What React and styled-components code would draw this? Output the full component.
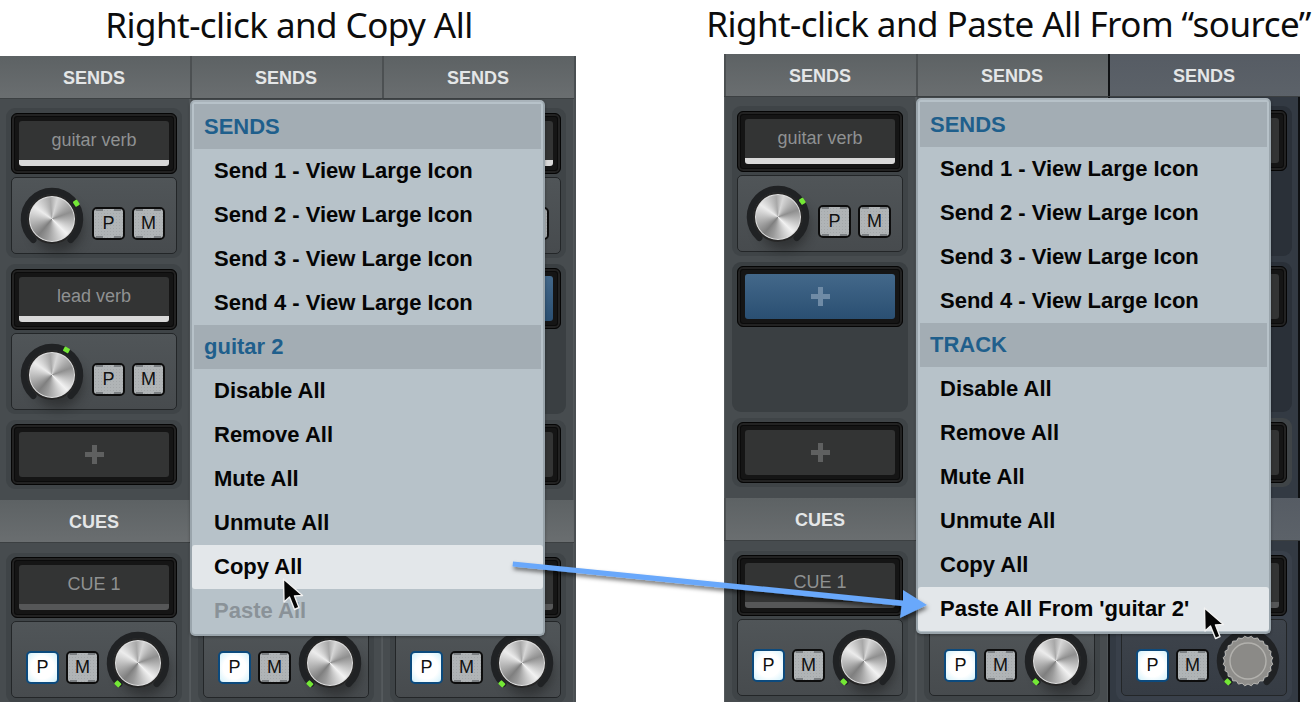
import React from "react";
import styled, { createGlobalStyle } from "styled-components";

const Global = createGlobalStyle`
  html, body { margin: 0; padding: 0; background: #fff; }
  body { font-family: "Liberation Sans", Arial, sans-serif; overflow: hidden; }
`;

const Page = styled.div`
  position: relative;
  display: flex;
  width: 1312px;
  height: 702px;
  overflow: hidden;
  background: #fff;
`;

const Scene = styled.section`
  display: flex;
  flex-direction: column;
  flex: none;
  width: ${(p) => p.$width}px;
  margin-left: ${(p) => p.$offset}px;
  height: 702px;
`;

const Title = styled.h1`
  margin: 0 0 0 ${(p) => p.$shift}px;
  height: ${(p) => p.$height}px;
  display: flex;
  justify-content: center;
  align-items: center;
  padding-bottom: 8px;
  box-sizing: border-box;
  white-space: nowrap;
  font-family: "Noto Sans", sans-serif;
  font-weight: 400;
  font-size: 35px;
  letter-spacing: -0.56px;
  color: #0c0c0c;
`;

const Console = styled.div`
  position: relative;
  flex: 1;
  display: flex;
  min-height: 0;
  background: #4a4f52;
`;

const Strip = styled.div`
  flex: none;
  width: 192px;
  box-sizing: border-box;
  display: flex;
  flex-direction: column;
  background: ${(p) => (p.$selected ? "#333a43" : "#474c4f")};
  box-shadow: ${(p) =>
    p.$selected
      ? "inset 2px 0 0 #101214, inset -2px 0 0 #0e1012"
      : "inset 1px 0 0 #555a5d, inset -1px 0 0 #52575a"};
`;

const SectionHeader = styled.div`
  flex: none;
  height: 42px;
  padding-top: 2px;
  box-sizing: border-box;
  display: flex;
  align-items: center;
  justify-content: center;
  font-size: 18px;
  font-weight: 700;
  color: #e4e6e7;
  background: ${(p) =>
    p.$selected
      ? "linear-gradient(#565c64, #5c6269)"
      : "linear-gradient(#5d6264, #6a6e70)"};
  box-shadow: inset ${(p) => (p.$selected ? "2px 0 0 #101214" : "2px 0 0 #4c5052")},
    0 1px 0 #3c4042;
`;

const SendsArea = styled.div`
  flex: none;
  height: 402px;
  box-sizing: border-box;
  padding: 10px 8px 0;
  display: flex;
  flex-direction: column;
  gap: 6px;
`;

const CueArea = styled.div`
  flex: 1;
  padding: 11px 8px 0;
`;

const Group = styled.div`
  box-sizing: border-box;
  width: 176px;
  height: ${(p) => p.$h}px;
  padding: ${(p) => p.$top || 4}px 5px 4px;
  border-radius: 9px;
  background: ${(p) =>
    p.$empty
      ? p.$selected ? "#2a3038" : "#3a3f42"
      : p.$selected ? "#39404a" : "#3f4447"};
  display: flex;
  flex-direction: column;
  gap: 3px;
`;

const Slot = styled.div`
  flex: none;
  box-sizing: border-box;
  height: 61px;
  padding: 7px;
  border-radius: 6px;
  background: #151515;
  border: 1px solid #050505;
  box-shadow: inset 0 0 0 2px #222, inset 0 0 0 3px #0b0b0b;
  display: flex;
`;

const Face = styled.div`
  flex: 1;
  overflow: hidden;
  border-radius: 3px;
  display: flex;
  align-items: center;
  justify-content: center;
  font-size: 18px;
  background: ${(p) =>
    p.$blue ? "linear-gradient(#43688a, #2a4f72)" : "#333434"};
  border-bottom: ${(p) =>
    p.$bar === "on" ? "6px solid #d9d9d9" : p.$bar === "off" ? "6px solid #565758" : "none"};
  color: ${(p) => (p.$blue ? "#6d8aa5" : "#8f9192")};
`;

const Control = styled.div`
  flex: none;
  box-sizing: border-box;
  height: 77px;
  padding: 9px 0 0 ${(p) => (p.$cue ? 14 : 8)}px;
  border-radius: 5px;
  border: 1px solid #232628;
  background: ${(p) =>
    p.$selected ? "linear-gradient(#3e444c, #363c44)" : "linear-gradient(#505558, #474b4e)"};
  display: flex;
  align-items: flex-start;
  gap: ${(p) => (p.$cue ? 7 : 8)}px;
`;

const Buttons = styled.div`
  display: flex;
  gap: 7px;
  margin-top: 20px;
`;

const Toggle = styled.div`
  width: 33px;
  height: 33px;
  box-sizing: border-box;
  border-radius: 5px;
  display: flex;
  align-items: center;
  justify-content: center;
  font-size: 18px;
  color: #111;
  border: 2px solid ${(p) => (p.$on ? "#0c4a7d" : "#0d0d0d")};
  background: ${(p) =>
    p.$on
      ? `radial-gradient(circle, #ffffff 55%, #d2f1fb 100%)`
      : `linear-gradient(#7b7f82,#7b7f82) 2px 0/7px 2px no-repeat,
         linear-gradient(#7b7f82,#7b7f82) 20px 0/7px 2px no-repeat,
         linear-gradient(#7b7f82,#7b7f82) 2px 27px/7px 2px no-repeat,
         linear-gradient(#7b7f82,#7b7f82) 20px 27px/7px 2px no-repeat,
         radial-gradient(#a3a7a9 1px, transparent 1px) 0 0/3px 3px,
         #b0b4b6`};
`;

const KnobWrap = styled.div`
  position: relative;
  flex: none;
  width: 64px;
  height: 64px;
`;

const KnobArc = styled.svg`
  position: absolute;
  inset: 0;
`;

const Metal = styled.div`
  position: absolute;
  left: 7px;
  top: 7px;
  width: 50px;
  height: 50px;
  box-sizing: border-box;
  border-radius: 50%;
  border: 2px solid #262626;
  box-shadow: inset 0 0 0 1px #e0e0e0, 6px 8px 12px rgba(20, 20, 20, 0.45);
  background: conic-gradient(
    from 15deg,
    #d6d6d6,
    #8f8f8f 55deg,
    #f2f2f2 120deg,
    #9a9a9a 180deg,
    #7f7f7f 205deg,
    #ececec 290deg,
    #a8a8a8 340deg,
    #d6d6d6
  );
`;

const Menu = styled.div`
  position: absolute;
  left: 192px;
  top: 44px;
  width: 355px;
  height: 536px;
  box-sizing: border-box;
  padding: 2px 0;
  border-radius: 5px;
  background: #b7c2c9;
  border: 2px solid #9aa5ac;
  border-top-color: #a9b3ba;
  box-shadow: 0 1px 3px rgba(0, 0, 0, 0.35);
  z-index: 2;
`;

const MenuHeading = styled.div`
  box-sizing: border-box;
  height: ${(p) => p.$h}px;
  margin: 0 2px;
  padding-left: 10px;
  display: flex;
  align-items: center;
  font-size: 22px;
  font-weight: 700;
  color: #1f5f8c;
  background: #a3adb4;
`;

const MenuItem = styled.div`
  box-sizing: border-box;
  height: 44px;
  padding-left: 22px;
  display: flex;
  align-items: center;
  font-size: 22px;
  font-weight: 700;
  border-radius: 3px;
  white-space: nowrap;
  color: ${(p) => (p.$disabled ? "#8a9298" : "#050505")};
  background: ${(p) => (p.$hot ? "#e3e7ea" : "transparent")};
`;

const Pointer = styled.svg`
  position: absolute;
  z-index: 3;
  left: ${(p) => p.$x}px;
  top: ${(p) => p.$y}px;
`;

const FlowArrow = styled.svg`
  position: absolute;
  left: 505px;
  top: 552px;
  z-index: 4;
`;

const AddMark = styled.span`
  display: flex;
  color: ${(p) => (p.$blue ? "#6f8ba6" : "#5f6060")};
`;

const polar = (deg, r) => {
  const a = ((deg - 90) * Math.PI) / 180;
  return [32 + r * Math.cos(a), 32 + r * Math.sin(a)];
};

const Knob = ({ led, gear }) => {
  const [ax, ay] = polar(-138, 28);
  const [bx, by] = polar(138, 28);
  const [lx, ly] = polar(led, 29);
  let teeth = "";
  if (gear) {
    for (let i = 0; i < 48; i++) {
      const a = (i / 48) * Math.PI * 2;
      const r = i % 2 ? 25 : 23;
      teeth += `${i ? "L" : "M"}${32 + r * Math.cos(a)} ${32 + r * Math.sin(a)}`;
    }
    teeth += "Z";
  }
  return (
    <KnobWrap>
      {!gear && <Metal />}
      <KnobArc width="64" height="64" viewBox="0 0 64 64">
        <path
          d={`M${ax} ${ay}A28 28 0 1 1 ${bx} ${by}`}
          fill="none"
          stroke="#202224"
          strokeWidth="6.5"
          strokeLinecap="round"
        />
        <rect
          x={lx - 3}
          y={ly - 2.5}
          width="6"
          height="5"
          rx="1"
          fill="#74e836"
          transform={`rotate(${led} ${lx} ${ly})`}
        />
        {gear && (
          <g>
            <path d={teeth} fill="#8f8e8b" stroke="#b9b8b4" strokeWidth="1" />
            <circle cx="32" cy="32" r="18" fill="#8b8a87" stroke="#b2b1ad" strokeWidth="1.4" />
          </g>
        )}
      </KnobArc>
    </KnobWrap>
  );
};

const Plus = () => (
  <svg width="19" height="19" viewBox="0 0 19 19">
    <path d="M7 0h5v7h7v5h-7v7H7v-7H0V7h7z" fill="currentColor" />
  </svg>
);

const Name = ({ text, bar }) => (
  <Slot>
    <Face $bar={bar}>{text}</Face>
  </Slot>
);

const AddSlot = ({ blue }) => (
  <Slot>
    <Face $blue={blue}>
      <AddMark $blue={blue}>
        <Plus />
      </AddMark>
    </Face>
  </Slot>
);

const SendControl = ({ led, selected }) => (
  <Control $selected={selected}>
    <Knob led={led} />
    <Buttons>
      <Toggle>P</Toggle>
      <Toggle>M</Toggle>
    </Buttons>
  </Control>
);

const SendGroup = ({ text, led, selected }) => (
  <Group $h={150} $top={5} $selected={selected}>
    <Name text={text} bar="on" />
    <SendControl led={led} selected={selected} />
  </Group>
);

const AddGroup = ({ selected }) => (
  <Group $h={150} $empty $selected={selected}>
    <AddSlot blue />
  </Group>
);

const PlainEmpty = ({ selected }) => (
  <Group $h={150} $empty $selected={selected}>
    <Slot>
      <Face />
    </Slot>
  </Group>
);

const LastGroup = () => (
  <Group $h={69}>
    <AddSlot />
  </Group>
);

const CueStrip = ({ selected, gear }) => (
  <CueArea>
    <Group $h={150} $selected={selected}>
      <Name text="CUE 1" bar="off" />
      <Control $cue $selected={selected}>
        <Buttons>
          <Toggle $on>P</Toggle>
          <Toggle>M</Toggle>
        </Buttons>
        <Knob led={-136} gear={gear} />
      </Control>
    </Group>
  </CueArea>
);

const ChannelStrip = ({ children, selected, gear }) => (
  <Strip $selected={selected}>
    <SectionHeader $selected={selected}>SENDS</SectionHeader>
    <SendsArea>{children}</SendsArea>
    <SectionHeader $selected={selected}>CUES</SectionHeader>
    <CueStrip selected={selected} gear={gear} />
  </Strip>
);

const sendItems = [
  "Send 1 - View Large Icon",
  "Send 2 - View Large Icon",
  "Send 3 - View Large Icon",
  "Send 4 - View Large Icon",
];
const trackItems = ["Disable All", "Remove All", "Mute All", "Unmute All"];

const Cursor = ({ x, y }) => (
  <Pointer $x={x} $y={y} width="24" height="34" viewBox="0 0 24 34">
    <path
      d="M1.500 1L2 24L7.500 19L12.500 31.500L17 29.500L12.500 18L20.500 17.500Z"
      fill="#050505"
      stroke="#f2f2f2"
      strokeWidth="1.4"
      strokeLinejoin="round"
    />
  </Pointer>
);

export default function App() {
  return (
    <Page>
      <Global />
      <Scene $width={578} $offset={-2}>
        <Title $height={56} $shift={4}>Right-click and Copy All</Title>
        <Console>
          <ChannelStrip>
            <SendGroup text="guitar verb" led={57} />
            <SendGroup text="lead verb" led={30} />
            <LastGroup />
          </ChannelStrip>
          <ChannelStrip>
            <SendGroup text="guitar verb" led={57} />
            <SendGroup text="lead verb" led={30} />
            <LastGroup />
          </ChannelStrip>
          <ChannelStrip>
            <SendGroup text="guitar verb" led={57} />
            <AddGroup />
            <LastGroup />
          </ChannelStrip>
          <Menu>
            <MenuHeading $h={45}>SENDS</MenuHeading>
            {sendItems.map((t) => (
              <MenuItem key={t}>{t}</MenuItem>
            ))}
            <MenuHeading $h={44}>guitar 2</MenuHeading>
            {trackItems.map((t) => (
              <MenuItem key={t}>{t}</MenuItem>
            ))}
            <MenuItem $hot>Copy All</MenuItem>
            <MenuItem $disabled>Paste All</MenuItem>
          </Menu>
          <Cursor x={284} y={522} />
        </Console>
      </Scene>
      <Scene $width={576} $offset={148}>
        <Title $height={54} $shift={-7}>Right-click and Paste All From “source”</Title>
        <Console>
          <ChannelStrip>
            <SendGroup text="guitar verb" led={57} />
            <AddGroup />
            <LastGroup />
          </ChannelStrip>
          <ChannelStrip>
            <SendGroup text="guitar verb" led={57} />
            <AddGroup />
            <LastGroup />
          </ChannelStrip>
          <ChannelStrip selected gear>
            <PlainEmpty selected />
            <PlainEmpty selected />
            <LastGroup />
          </ChannelStrip>
          <Menu>
            <MenuHeading $h={45}>SENDS</MenuHeading>
            {sendItems.map((t) => (
              <MenuItem key={t}>{t}</MenuItem>
            ))}
            <MenuHeading $h={44}>TRACK</MenuHeading>
            {trackItems.map((t) => (
              <MenuItem key={t}>{t}</MenuItem>
            ))}
            <MenuItem>Copy All</MenuItem>
            <MenuItem $hot>Paste All From 'guitar 2'</MenuItem>
          </Menu>
          <Cursor x={479} y={553} />
        </Console>
      </Scene>
      <FlowArrow width="430" height="74" viewBox="0 0 430 74">
        <defs>
          <filter id="flowShadow" x="-5%" y="-30%" width="110%" height="170%">
            <feDropShadow dx="1" dy="3" stdDeviation="2" floodColor="#000" floodOpacity="0.55" />
          </filter>
        </defs>
        <path
          d="M8 9.500L398 48.500L398 38L422 53L395 66L396.500 54L7.500 14.500Z"
          fill="#69a8fb"
          filter="url(#flowShadow)"
        />
      </FlowArrow>
    </Page>
  );
}
